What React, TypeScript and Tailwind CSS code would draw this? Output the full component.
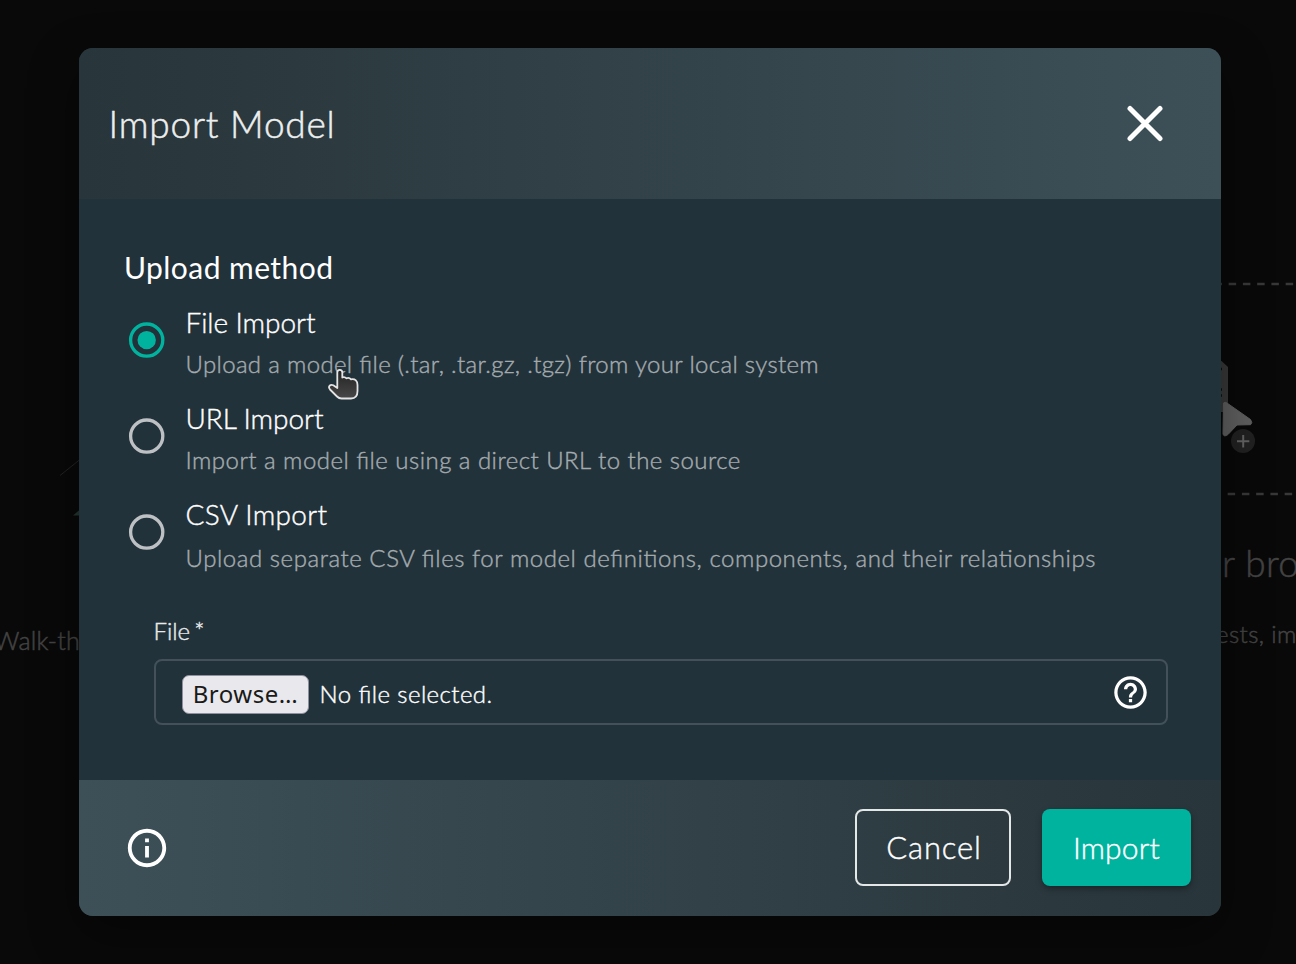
import React from "react";

type Option = { title: string; titleCls: string; desc: string; descCls: string; checked?: boolean };

const options: Option[] = [
  {
    title: "File Import",
    titleCls: "tracking-[-0.05px]",
    desc: "Upload a model file (.tar, .tar.gz, .tgz) from your local system",
    descCls: "mt-[6px] tracking-[0.33px]",
    checked: true,
  },
  {
    title: "URL Import",
    titleCls: "tracking-[-0.05px]",
    desc: "Import a model file using a direct URL to the source",
    descCls: "mt-[6px] tracking-[0.47px]",
  },
  {
    title: "CSV Import",
    titleCls: "tracking-[0.3px]",
    desc: "Upload separate CSV files for model definitions, components, and their relationships",
    descCls: "mt-[8px] tracking-[0.56px]",
  },
];

function Radio({ checked }: { checked?: boolean }) {
  return (
    <svg
      viewBox="0 0 43 43"
      className={checked ? "h-[43px] w-[43px] shrink-0 text-[#00b39f]" : "h-[43px] w-[43px] shrink-0 text-[#bdc1c4]"}
    >
      <circle cx="21.7" cy="21.1" r="16.1" fill="none" stroke="currentColor" strokeWidth="3.3" />
      {checked && <circle cx="21.7" cy="21.1" r="9.2" fill="currentColor" />}
    </svg>
  );
}

function Backdrop() {
  return (
    <div className="absolute inset-0 font-light text-[#434343] [-webkit-text-stroke:0.5px]">
      <svg className="absolute inset-0" width="1296" height="964" viewBox="0 0 1296 964" fill="none">
        <path d="M60 475.500L80 459.500" stroke="#232323" strokeWidth="1" />
        <path d="M73 515.500L80 509.500V515.500Z" fill="#24362f" />
        <path d="M1214.400 284H1296M1213.400 494H1296" stroke="#383838" strokeWidth="2.500" strokeDasharray="7.500 6.750" />
        <path d="M1200 361H1221.500L1228 367V412H1200Z" fill="#383838" />
        <path d="M1218 369H1222M1218 389.500H1222M1218 395.500H1222" stroke="#111" strokeWidth="2.500" />
        <path
          d="M1223.500 403Q1225 401.500 1227 403L1250.500 419.500Q1253 423 1250.500 424.700L1237 425L1228 434.500Q1224 437.500 1223 434Z"
          fill="#5f5f5f"
          stroke="#5f5f5f"
          strokeLinejoin="round"
        />
        <circle cx="1243" cy="441" r="12" fill="#212121" />
        <path d="M1237 441.300H1249.300M1243.200 435V447.500" stroke="#626262" strokeWidth="2" />
      </svg>
      <span className="absolute left-[-6px] top-[624px] whitespace-nowrap text-[25px] leading-[32px] tracking-[0.2px]">Walk-th</span>
      <span className="absolute left-[1222px] top-[543px] whitespace-nowrap text-[37px] leading-[40px] tracking-[0.4px]">r bro</span>
      <span className="absolute left-[1216px] top-[618px] whitespace-nowrap text-[24px] leading-[32px] tracking-[0.4px]">ests, im</span>
    </div>
  );
}

function HandCursor() {
  return (
    <svg className="absolute left-[325px] top-[366px]" width="38" height="38" viewBox="0 0 38 38">
      <defs>
        <linearGradient id="hand" x1="0" y1="0" x2="0" y2="1">
          <stop offset="0" stopColor="#222" />
          <stop offset="1" stopColor="#484848" />
        </linearGradient>
      </defs>
      <path
        d="M12.300 6.500C12.300 2.900 17.300 2.900 17.300 6.500V11.500Q19.500 10.300 21.500 12.300Q24 11 26 13.300Q32.500 12.500 32.500 19V25Q32.500 32.500 26 32.500H16.500Q14 32.500 12 30.500L5 23.500C2.500 20.500 5.500 17.800 8.300 19.300L12.300 22Z"
        fill="url(#hand)"
        stroke="#e4e4e4"
        strokeWidth="1.800"
        strokeLinejoin="round"
      />
    </svg>
  );
}

export default function App() {
  return (
    <div className="relative h-[964px] w-[1296px] overflow-hidden bg-[#090909] font-['Lato',sans-serif] [font-feature-settings:'liga']">
      <Backdrop />
      <div className="relative flex h-full flex-col pl-[78.500px] pt-[48px]">
        <div className="flex h-[867.500px] w-[1142px] flex-col overflow-hidden rounded-[14px] bg-[#22323a] shadow-[0_18px_50px_0px_rgba(0,0,0,0.4)]">
          <header className="flex h-[151px] shrink-0 items-center justify-between bg-linear-to-r from-[#28353a] to-[#3d5058] pl-[30px] pr-[57px]">
            <h1 className="text-[37px] font-light leading-[44px] tracking-[0.8px] text-[#eceeee] [-webkit-text-stroke:0.5px]">Import Model</h1>
            <svg width="38" height="38" viewBox="0 0 38 38" className="text-white">
              <path d="M4 3.500L34 33.500M34 3.500L4 33.500" stroke="currentColor" strokeWidth="5" strokeLinecap="round" />
            </svg>
          </header>

          <main className="flex grow flex-col pl-[45.500px] pr-[52.500px] pt-[48px]">
            <h2 className="h-[40px] whitespace-nowrap text-[30px] leading-[40px] tracking-[0.45px] text-white">Upload method</h2>
            <div className="mt-[5px] flex flex-col">
              {options.map((o) => (
                <div key={o.title} className="flex h-[96px]">
                  <div className="flex w-[61.500px] items-center pl-[1px]">
                    <Radio checked={o.checked} />
                  </div>
                  <div className="flex flex-col pt-[12px] font-light [-webkit-text-stroke:0.4px]">
                    <span className={"whitespace-nowrap text-[28px] leading-[36px] text-white " + o.titleCls}>{o.title}</span>
                    <span className={"whitespace-nowrap text-[24px] leading-[36px] text-[#a4abaf] " + o.descCls}>{o.desc}</span>
                  </div>
                </div>
              ))}
            </div>
            <div className="flex flex-col pl-[29.500px]">
              <label className="mt-[35px] flex h-[32px] gap-[4px] text-[24px] font-light leading-[32px] text-[#e8eaeb] [-webkit-text-stroke:0.4px]">
                <span>File</span>
                <span>*</span>
              </label>
              <div className="mt-[12px] flex h-[66px] items-center rounded-[8px] border-2 border-[#43515a] pl-[26.500px] pr-[16px]">
                <button className="mt-[4px] flex h-[39px] w-[127px] items-center justify-center rounded-[7px] border-[1.500px] border-[#8f8f9d] bg-[#e9e9ed] font-['Noto_Sans',sans-serif] text-[24px] leading-none tracking-[0.5px] text-[#1a1a1a]">
                  Browse…
                </button>
                <span className="ml-[10.500px] mt-[3px] whitespace-nowrap text-[24px] font-light leading-[32px] tracking-[0.42px] text-white [-webkit-text-stroke:0.4px]">
                  No file selected.
                </span>
                <svg width="39" height="39" viewBox="0 0 24 24" fill="#fff" className="ml-auto">
                  <path d="M11 18h2v-2h-2zm1-16C6.480 2 2 6.480 2 12s4.480 10 10 10 10-4.480 10-10S17.520 2 12 2m0 18c-4.410 0-8-3.590-8-8s3.590-8 8-8 8 3.590 8 8-3.590 8-8 8m0-14c-2.210 0-4 1.790-4 4h2c0-1.100.9-2 2-2s2 .9 2 2c0 2-3 1.750-3 5h2c0-2.250 3-2.500 3-5 0-2.210-1.790-4-4-4" />
                </svg>
              </div>
            </div>
          </main>

          <footer className="flex h-[136px] shrink-0 items-center bg-linear-to-r from-[#3d5058] to-[#28353a] pl-[45.500px] pr-[29.500px]">
            <svg width="46" height="46" viewBox="0 0 24 24" fill="#fff">
              <path d="M11 7h2v2h-2zm0 4h2v6h-2zm1-9C6.480 2 2 6.480 2 12s4.480 10 10 10 10-4.480 10-10S17.520 2 12 2m0 18c-4.410 0-8-3.590-8-8s3.590-8 8-8 8 3.590 8 8-3.590 8-8 8" />
            </svg>
            <button className="ml-auto flex h-[77px] w-[156px] items-center justify-center rounded-[8px] border-[2px] border-[#e4e7e8] pl-[2px] text-[31px] font-light tracking-[0.9px] text-white [-webkit-text-stroke:0.4px]">
              Cancel
            </button>
            <button className="ml-[31px] flex h-[77px] w-[149px] items-center justify-center rounded-[8px] bg-[#00b39f] text-[30px] font-light tracking-[0.2px] text-white shadow-[0_3px_6px_rgba(0,0,0,0.35)] [-webkit-text-stroke:0.4px]">
              Import
            </button>
          </footer>
        </div>
      </div>
      <HandCursor />
    </div>
  );
}
